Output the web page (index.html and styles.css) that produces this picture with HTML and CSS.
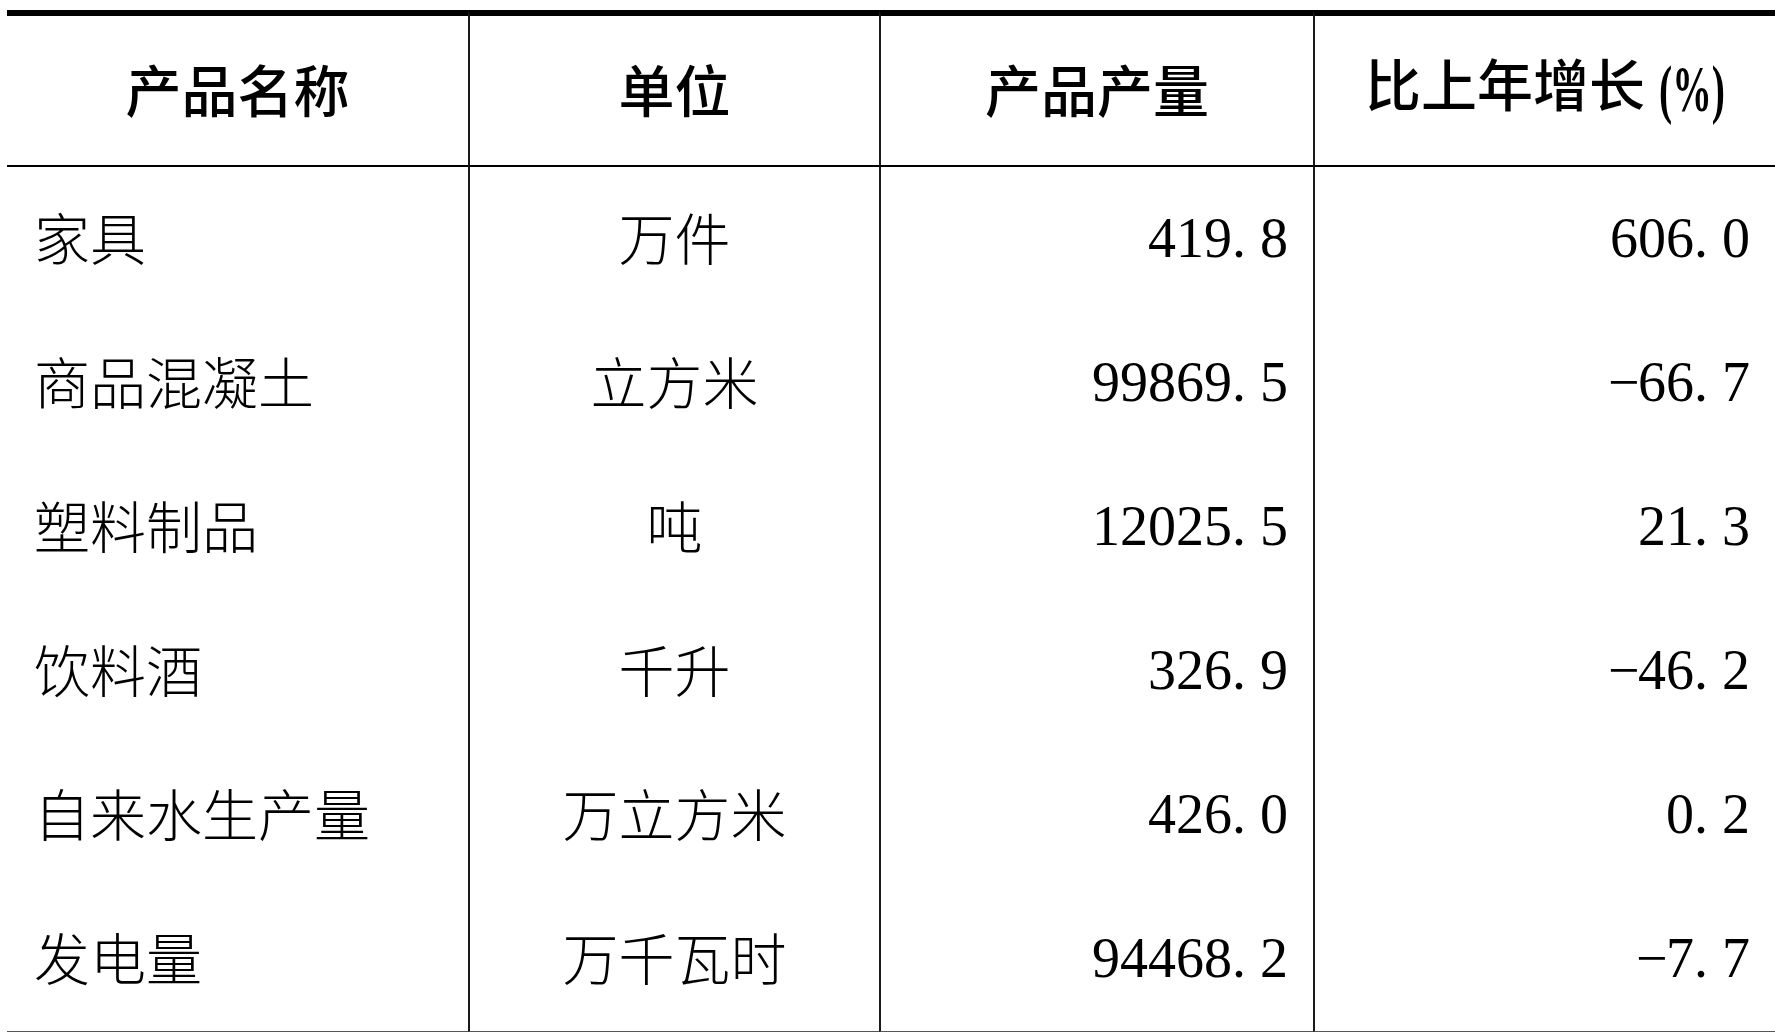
FILE: index.html
```html
<!DOCTYPE html>
<html lang="zh-CN">
<head>
<meta charset="utf-8">
<title>主要工业产品产量</title>
<link rel="stylesheet" href="styles.css">
</head>
<body>
<div class="page">
  <table class="stats">
    <colgroup>
      <col class="c1"><col class="c2"><col class="c3"><col class="c4">
    </colgroup>
    <thead>
      <tr>
        <th>产品名称</th>
        <th>单位</th>
        <th>产品产量</th>
        <th>比上年增长<span class="pct">(%)</span></th>
      </tr>
    </thead>
    <tbody>
      <tr><td class="name">家具</td><td class="unit">万件</td><td class="num">419<span class="pt">.</span>8</td><td class="num">606<span class="pt">.</span>0</td></tr>
      <tr><td class="name">商品混凝土</td><td class="unit">立方米</td><td class="num">99869<span class="pt">.</span>5</td><td class="num"><span class="neg">−</span>66<span class="pt">.</span>7</td></tr>
      <tr><td class="name">塑料制品</td><td class="unit">吨</td><td class="num">12025<span class="pt">.</span>5</td><td class="num">21<span class="pt">.</span>3</td></tr>
      <tr><td class="name">饮料酒</td><td class="unit">千升</td><td class="num">326<span class="pt">.</span>9</td><td class="num"><span class="neg">−</span>46<span class="pt">.</span>2</td></tr>
      <tr><td class="name">自来水生产量</td><td class="unit">万立方米</td><td class="num">426<span class="pt">.</span>0</td><td class="num">0<span class="pt">.</span>2</td></tr>
      <tr class="last"><td class="name">发电量</td><td class="unit">万千瓦时</td><td class="num">94468<span class="pt">.</span>2</td><td class="num"><span class="neg">−</span>7<span class="pt">.</span>7</td></tr>
    </tbody>
  </table>
</div>
</body>
</html>
```
FILE: styles.css
```css
html, body {
  margin: 0;
  padding: 0;
  background: #ffffff;
}

.page {
  padding: 10px 0 0 7px;
  overflow: hidden;
}

.stats {
  width: 1768px;
  table-layout: fixed;
  border-collapse: separate;
  border-spacing: 0;
  color: #000;
  font-family: "Noto Sans CJK SC", "Noto Sans", sans-serif;
  font-size: 56px;
}

.c1 { width: 461px; }
.c2 { width: 411px; }
.c3 { width: 434px; }
.c4 { width: 462px; }

.stats th,
.stats td {
  box-sizing: border-box;
  padding: 0;
  vertical-align: middle;
  white-space: nowrap;
  line-height: 1;
}

.stats th {
  height: 157px;
  border-top: 6px solid #000;
  border-bottom: 2px solid #000;
  font-weight: 500;
  text-align: center;
  padding-bottom: 6px;
}

.stats th + th,
.stats td + td {
  border-left: 2px solid #1a1a1a;
}

.stats td {
  height: 144px;
  font-weight: 300;
}

.stats tr.last td {
  height: 145px;
  border-bottom: 1px solid #555;
}

.stats td.name {
  text-align: left;
  padding-left: 27px;
  padding-bottom: 6px;
}

.stats td.unit {
  text-align: center;
  padding-bottom: 6px;
}

.stats td.num {
  text-align: right;
  padding-right: 25px;
  padding-bottom: 2px;
  font-family: "Liberation Serif", "Times New Roman", serif;
  font-weight: 400;
  font-size: 56px;
}

.pt {
  display: inline-block;
  width: 28px;
  text-align: left;
}

.neg {
  display: inline-block;
  width: 30px;
  text-align: left;
}

.pct {
  display: inline-block;
  margin-left: 14px;
  width: 66px;
  font-family: "Liberation Serif", "Times New Roman", serif;
  font-weight: 700;
  font-size: 66px;
  transform: scaleX(0.6);
  transform-origin: left center;
  text-align: left;
  vertical-align: -5px;
}
```
